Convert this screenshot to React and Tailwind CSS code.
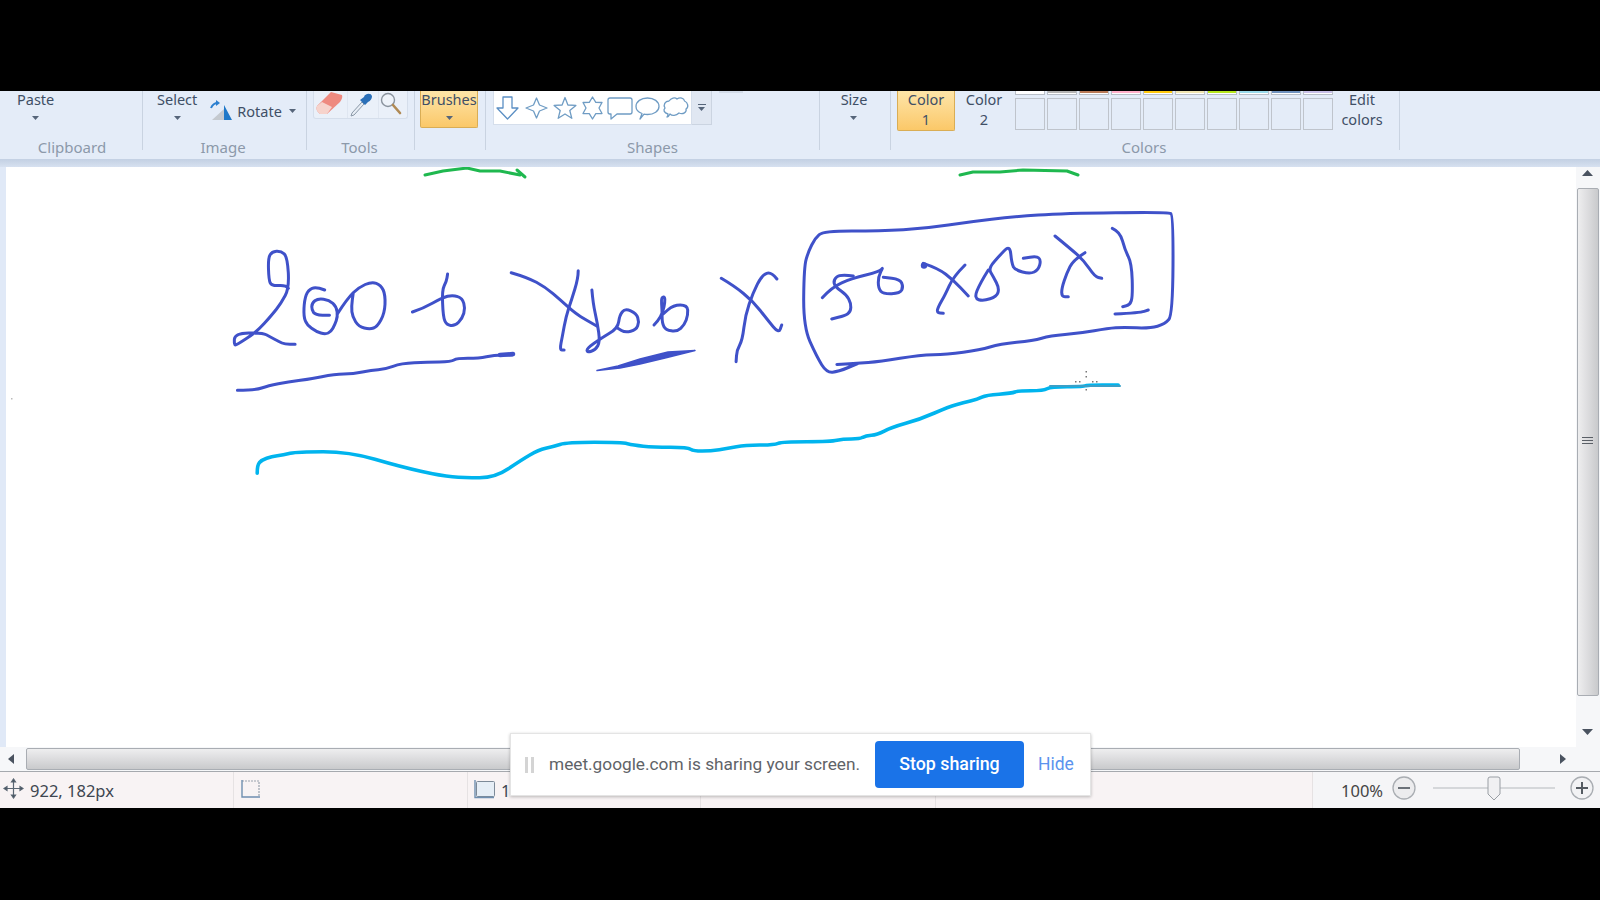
const sans = { fontFamily: '"Noto Sans", "Open Sans", sans-serif' };

const z7 = (p) => [220 + p[0] * 0.37, 200 + p[1] / 3];
const z8 = (p) => [780 + p[0] / 3, 200 + p[1] / 3];
const z9 = (p) => [240 + p[0] * 0.574, 370 + p[1] / 3];
const toD = (pts, map) => {
  const q = pts.map(map);
  let d = 'M' + q[0][0].toFixed(1) + ' ' + q[0][1].toFixed(1);
  for (let i = 1; i < q.length - 1; i++) {
    const mx = (q[i][0] + q[i + 1][0]) / 2;
    const my = (q[i][1] + q[i + 1][1]) / 2;
    d += ' Q' + q[i][0].toFixed(1) + ' ' + q[i][1].toFixed(1) + ' ' + mx.toFixed(1) + ' ' + my.toFixed(1);
  }
  const e = q[q.length - 1];
  return d + ' L' + e[0].toFixed(1) + ' ' + e[1].toFixed(1);
};

const s7 = [
  [[185,265],[178,255],[140,258],[132,240],[130,175],[140,155],[165,153],[182,170],[187,265],[165,310],[140,345],[100,395],[45,435],[38,435],[40,400],[115,398],[135,410],[160,425],[175,433],[203,433]],
  [[283,270],[260,260],[238,270],[228,300],[226,350],[235,375],[260,395],[285,403],[300,395],[310,375],[318,350],[315,320],[295,300],[265,295],[248,310],[248,330],[258,345],[296,346]],
  [[318,340],[345,295],[375,262],[410,245],[435,255],[447,285],[445,340],[425,380],[405,388],[375,380],[358,350],[355,320],[360,280]],
  [[520,336],[550,325],[600,293],[630,285],[655,295],[663,325],[655,355],[635,378],[612,375],[603,350],[600,270],[612,245],[615,222]],
  [[47,571],[95,571],[130,557],[185,545],[240,538],[310,522],[360,522],[410,510],[445,508],[490,490],[560,487],[625,485],[640,475],[700,475],[740,465],[790,465]],
  [[787,218],[830,232],[880,262],[920,300],[960,340],[990,360],[1018,378]],
  [[968,212],[968,235],[950,300],[935,350],[925,410],[918,450],[930,450]],
  [[1005,270],[1008,310],[1020,370],[1027,425],[1015,450],[992,458],[992,445],[1030,415],[1075,385],[1080,345],[1095,325],[1125,340],[1133,365],[1125,390],[1095,398],[1075,385]],
  [[1173,375],[1195,350],[1205,290],[1192,292],[1195,330],[1195,370],[1205,390],[1235,395],[1255,375],[1265,345],[1263,315],[1225,315],[1195,345]],
  [[1355,235],[1390,258],[1440,303],[1480,360],[1510,400],[1518,375]],
  [[1505,237],[1490,215],[1465,225],[1440,280],[1420,345],[1412,420],[1397,450],[1395,485]],
];
const s8 = [
  [[235,490],[140,495],[230,490],[300,485],[420,465],[500,463],[600,450],[660,432],[760,422],[810,407],[900,400],[985,385],[1030,382],[1110,385],[1155,372],[1178,345],[1180,45],[1165,36],[850,40],[700,50],[570,65],[440,85],[300,93],[130,93],[105,115],[85,155],[72,200],[70,380],[110,470],[140,518],[175,515],[235,490]],
  [[127,293],[155,262],[215,235],[300,215],[310,200],[295,230],[295,265],[310,282],[360,280],[370,260],[360,238],[310,232]],
  [[220,228],[180,222],[160,240],[165,260],[200,285],[213,310],[212,335],[195,347],[155,357]],
  [[430,190],[475,205],[520,240],[565,288]],
  [[555,195],[520,230],[495,285],[475,320],[470,338],[490,340]],
  [[625,210],[600,250],[582,295],[610,303],[650,290],[658,265],[640,230],[625,205],[660,165],[690,135],[695,190],[705,210],[750,222],[775,210],[783,180],[770,168],[730,175]],
  [[825,108],[870,145],[910,180],[945,230],[965,235]],
  [[915,158],[880,180],[860,220],[845,265],[845,290],[865,290]],
  [[997,85],[1020,95],[1035,150],[1055,190],[1058,290],[1050,315],[1028,320]],
  [[1005,342],[1080,338],[1105,330]],
];
const cyan = [[30,310],[30,285],[38,270],[55,260],[75,255],[100,245],[190,245],[280,290],[350,317],[390,323],[445,323],[490,270],[520,240],[545,230],[570,217],[665,217],[685,225],[720,232],[780,232],[790,243],[820,243],[850,235],[880,225],[930,225],[945,215],[1030,215],[1050,207],[1080,207],[1090,197],[1110,195],[1135,172],[1185,148],[1235,110],[1260,98],[1285,88],[1300,75],[1345,70],[1355,62],[1400,62],[1412,50],[1470,50],[1475,45],[1530,45]];

function Drawing() {
  return (
    <svg className="absolute left-0 top-0 h-[580px] w-[1570px]" viewBox="6 167 1570 580" fill="none" strokeLinecap="round" strokeLinejoin="round">
      <g stroke="#1fb84f" strokeWidth="3">
        <path d="M425 175 L443 171 L467 168 L480 171 L500 171 L520 175" />
        <path d="M517 170 L525 177" />
        <path d="M960 175 L973 172 L1000 172 L1023 170 L1067 171 L1078 175" />
      </g>
      <g stroke="#3f51c9" strokeWidth="3">
        {s7.map((p, i) => <path key={i} d={toD(p, z7)} />)}
        {s8.map((p, i) => <path key={i} d={toD(p, z8)} />)}
      </g>
      <path d="M500 355 L513 354" stroke="#3f51c9" strokeWidth="4.500" />
      <path d="M597 370.500 L620 368 L640 364 L665 358 L695 350.500 L668 352 L640 359 L618 366Z" fill="#3f51c9" stroke="#3f51c9" strokeWidth="1.500" />
      <circle cx="924" cy="265.500" r="3.200" fill="#3f51c9" />
      <path d={toD(cyan, z9)} stroke="#00b4ee" strokeWidth="3.600" />
      <path d="M1050 386 H1120" stroke="#3aa0c8" strokeWidth="2" />
      <g fill="#777">
        <rect x="1085.500" y="371" width="1.500" height="1.500" />
        <rect x="1085.500" y="376" width="1.500" height="1.500" />
        <rect x="1085.500" y="389" width="1.500" height="1.500" />
        <rect x="1075" y="381" width="1.500" height="1.500" />
        <rect x="1079" y="381" width="1.500" height="1.500" />
        <rect x="1092" y="381" width="1.500" height="1.500" />
        <rect x="1096" y="381" width="1.500" height="1.500" />
        <rect x="11" y="398" width="1.500" height="1.500" fill="#bbb" />
      </g>
    </svg>
  );
}

function Caret({ className = '' }) {
  return (
    <svg className={className} width="7" height="4" viewBox="0 0 7 4"><path d="M0 0H7L3.500 4Z" fill="#56657a" /></svg>
  );
}

function BigButton({ lines, caret }) {
  return (
    <div className="flex flex-col items-center text-[#3f4f66]">
      <span className="whitespace-nowrap leading-[17px]">{lines[0]}</span>
      {lines[1] && <span className="mt-[2px] whitespace-nowrap leading-[19px]">{lines[1]}</span>}
      {caret && <Caret className="mt-[8px]" />}
    </div>
  );
}

function Group({ w, label, labelClass = '', children }) {
  return (
    <div className={`flex h-[59px] shrink-0 flex-col border-r border-[#c9d3e1] ${w}`}>
      <div className="relative flex flex-1 items-start">{children}</div>
      {label ? (
        <div className={`mb-[-5px] h-[16px] text-center text-[15px] leading-[16px] text-[#8c99aa] ${labelClass}`}>{label}</div>
      ) : null}
    </div>
  );
}

function star(cx, cy, R, r, n) {
  const pts = [];
  for (let i = 0; i < n * 2; i++) {
    const a = -Math.PI / 2 + (i * Math.PI) / n;
    const rad = i % 2 ? r : R;
    pts.push((cx + rad * Math.cos(a)).toFixed(1) + ',' + (cy + rad * Math.sin(a)).toFixed(1));
  }
  return pts.join(' ');
}

function ShapesGallery() {
  return (
    <svg width="199" height="34" viewBox="0 0 199 34" fill="none" stroke="#6f9cc4" strokeWidth="1.300" strokeLinejoin="round">
      <path d="M10 6H19V17H25L14.500 28L4 17H10Z" stroke="#5b8fc4" />
      <path d="M43.500 7L46.500 14L54 17L46.500 20L43.500 27L40.500 20L33 17L40.500 14Z" />
      <polygon points={star(72, 18, 11.500, 5, 5)} />
      <polygon points={star(99.500, 17, 11, 6.500, 6)} />
      <path d="M117 7H137Q139 7 139 9V21Q139 23 137 23H124L118 28V23H117Q115 23 115 21V9Q115 7 117 7Z" />
      <path d="M147 28L149 22.500C145 21 143 18.500 143 15.500C143 10.500 148 7 154.500 7C161 7 166 10.500 166 15.500C166 20 161 23.500 154.500 23.500C153 23.500 152 23.500 151 23.200Z" />
      <path d="M174 26C175 25 175 24 175 23C171 22 170 19 172 17C170 14 172 10 176 10C178 7 182 6 184 8C187 6 191 7 191.500 10C195 11.500 196 16 193 18C194 21 190 24 186 22C183 25 179 25 177 23C176 25 175 26 174 26Z" />
    </svg>
  );
}

function RibbonIcons() {
  return (
    <svg width="95" height="28" viewBox="0 0 95 28" className="shrink-0">
      <g transform="translate(-313 -91)">
        <path d="M331 92 L342 95 Q343 98 340 102 L327 114 L320 114 Q315 110 317 106Z" fill="#ee8a80" />
        <path d="M322 102 L332 107 L327 114 L320 114 Q315 110 317 106Z" fill="#f6d3cc" />
        <path d="M352 113 L351 116 L354 115 L364 104 L362 102Z" fill="#e7edf5" stroke="#8a98a8" strokeWidth="1" />
        <path d="M360 100 L365 105 L368 102 Q372 100 372 96 Q371 93 367 94 Q364 95 364 97Z" fill="#2a6fb8" />
        <circle cx="388" cy="100" r="6.500" fill="#eef3fa" stroke="#8a939e" strokeWidth="1.400" />
        <path d="M393 105 L400 113" stroke="#b08a55" strokeWidth="2.600" strokeLinecap="round" />
        <path d="M347.500 91V119M378.500 91V119" stroke="#dfe6f1" />
      </g>
    </svg>
  );
}

const swatches = ['#ffffff', '#b4b4b4', '#b97a57', '#ffaec9', '#ffc90e', '#efe4b0', '#b5e61d', '#99d9ea', '#7092be', '#c8bfe7'];

function Ribbon() {
  return (
    <div className="flex h-[68px] bg-[#e4ecf8] text-[14.500px]" style={sans}>
      <Group w="w-[143px]" label="Clipboard" labelClass="pl-[2px]">
        <div className="ml-[17px]"><BigButton lines={['Paste']} caret /></div>
      </Group>
      <Group w="w-[164px]" label="Image" labelClass="pr-[3px]">
        <div className="ml-[14px]"><BigButton lines={['Select']} caret /></div>
        <div className="ml-[13px] mt-[9px] flex items-center text-[#3f4f66]">
          <svg width="26" height="22" viewBox="0 0 26 22" className="shrink-0">
            <path d="M1 8 Q3 3 8 3" fill="none" stroke="#2a7fd0" strokeWidth="2" />
            <path d="M6 0 L10 3 L6 6Z" fill="#2a7fd0" />
            <path d="M2 20 L14 20 L14 9Z" fill="#c4c9cf" />
            <path d="M14 5 L22 20 L14 20Z" fill="#1f78c8" />
          </svg>
          <span className="ml-[1px] leading-[19px]">Rotate</span>
          <Caret className="ml-[7px]" />
        </div>
      </Group>
      <Group w="w-[108px]" label="Tools" labelClass="pr-[2px]">
        <div className="ml-[6px] flex h-[28px] w-[95px] overflow-hidden rounded-b-[3px] border border-t-0 border-[#d5deeb] bg-[#eaf0f9]">
          <div className="-ml-px"><RibbonIcons /></div>
        </div>
      </Group>
      <Group w="w-[71px]">
        <div className="ml-[5px] flex h-[37px] w-[58px] flex-col items-center rounded-b-[2px] border border-t-0 border-[#d9ad55] bg-gradient-to-b from-[#fde5a8] to-[#fbc868] text-[#3f4f66]">
          <span className="leading-[17px]">Brushes</span>
          <Caret className="mt-[8px]" />
        </div>
      </Group>
      <Group w="w-[334px]" label="Shapes">
        <div className="ml-[7px] flex">
          <div className="h-[34px] w-[199px] border border-t-0 border-[#d5deeb] bg-white"><div className="-ml-px"><ShapesGallery /></div></div>
          <div className="flex h-[34px] w-[20px] flex-col items-center justify-center gap-[2px] border-b border-r border-[#cbd4e1] bg-[#e0e7f2]">
            <div className="h-[1.500px] w-[8px] bg-[#56657a]" />
            <Caret />
          </div>
        </div>
        <div className="ml-[7px] h-[2px] w-[24px] bg-[#d2dbe8]" />
      </Group>
      <Group w="w-[71px]">
        <div className="flex w-full justify-center pr-[2px]"><BigButton lines={['Size']} caret /></div>
      </Group>
      <Group w="w-[509px]" label="Colors" labelClass="pr-[2px]">
        <div className="ml-[6px] flex h-[40px] w-[58px] flex-col items-center rounded-b-[2px] border border-t-0 border-[#d9ad55] bg-gradient-to-b from-[#fde5a8] to-[#fbc868] text-[#3f4f66]">
          <span className="leading-[17px]">Color</span>
          <span className="mt-[2px] leading-[19px]">1</span>
        </div>
        <div className="flex w-[58px] justify-center"><BigButton lines={['Color', '2']} /></div>
        <div className="ml-[2px] grid h-[39px] w-[318px] grid-cols-10 content-start gap-x-[2px] gap-y-[3px]">
          {swatches.map((c) => (
            <div key={c} className="h-[4px] border border-t-0 border-[#b9bfc8] bg-white pb-[1px]"><div className="h-full" style={{ background: c }} /></div>
          ))}
          {swatches.map((c) => (
            <div key={c} className="h-[32px] border border-[#bfc4cc]" />
          ))}
        </div>
        <div className="flex w-[58px] justify-center"><BigButton lines={['Edit', 'colors']} /></div>
      </Group>
      <div className="flex-1" />
    </div>
  );
}

function VScroll() {
  return (
    <div className="flex w-[24px] shrink-0 flex-col items-center bg-[#f6f7f9]">
      <svg className="-ml-[2px] mt-[3px] shrink-0" width="11" height="6" viewBox="0 0 11 6"><path d="M0 6L5.500 0L11 6Z" fill="#4a5360" /></svg>
      <div className="-ml-px mt-[12px] flex h-[508px] w-[22px] flex-col items-center justify-center gap-[2px] rounded-[2px] border border-[#a9adb3] bg-gradient-to-r from-[#eeeeef] via-[#dcdcde] to-[#c9cacc] pb-[3px]">
        <div className="h-px w-[11px] bg-[#5a5f66]" />
        <div className="h-px w-[11px] bg-[#5a5f66]" />
        <div className="h-px w-[11px] bg-[#5a5f66]" />
      </div>
      <svg className="-ml-[2px] mt-[33px] shrink-0" width="11" height="6" viewBox="0 0 11 6"><path d="M0 0H11L5.500 6Z" fill="#4a5360" /></svg>
    </div>
  );
}

function HScroll() {
  return (
    <div className="flex h-[24px] items-center bg-[#f6f7f9]">
      <svg className="ml-[8px] shrink-0" width="6" height="10" viewBox="0 0 6 10"><path d="M6 0V10L0 5Z" fill="#4a5360" /></svg>
      <div className="ml-[12px] h-[22px] w-[1494px] rounded-[2px] border border-[#a9adb3] bg-gradient-to-b from-[#eeeeef] via-[#dcdcde] to-[#c9cacc]" />
      <svg className="ml-[40px] shrink-0" width="6" height="10" viewBox="0 0 6 10"><path d="M0 0L6 5L0 10Z" fill="#4a5360" /></svg>
    </div>
  );
}

function StatusBar() {
  return (
    <div className="flex h-[37px] border-t border-[#a6a9ae] bg-[#f8f3f4] text-[16.500px] text-[#3e4650]" style={sans}>
      <div className="flex w-[234px] shrink-0 items-center border-r border-[#e6e2e3]">
        <svg className="mb-[4px] ml-[3px]" width="21" height="21" viewBox="0 0 21 21" fill="none" stroke="#5a6672" strokeWidth="1.200">
          <path d="M1 10.500H20M10.500 1V20" />
          <path d="M1 10.500L4 8.500V12.500ZM20 10.500L17 8.500V12.500ZM10.500 1L8.500 4H12.500ZM10.500 20L8.500 17H12.500Z" fill="#3f4c5a" />
        </svg>
        <span className="ml-[6px] whitespace-nowrap pt-[3px]">922, 182px</span>
      </div>
      <div className="flex w-[234px] shrink-0 items-center border-r border-[#e6e2e3] pb-[3px]">
        <svg className="ml-[5px]" width="22" height="20" viewBox="0 0 22 20" fill="none">
          <path d="M3 2H20V17" stroke="#9aa3ad" strokeWidth="1.200" strokeDasharray="2 1" />
          <path d="M3 1V18H21" stroke="#6f8fb0" strokeWidth="1.400" />
        </svg>
      </div>
      <div className="flex w-[233px] shrink-0 items-center border-r border-[#e6e2e3] pb-[1px]">
        <svg className="mb-[2px] ml-[5px]" width="22" height="20" viewBox="0 0 22 20">
          <rect x="3.500" y="2.500" width="18" height="15" rx="1" fill="#e6eef6" stroke="#7d8a98" />
          <path d="M2 1V18.500H21" fill="none" stroke="#6f8fb0" strokeWidth="1.400" />
        </svg>
        <span className="ml-[6px] pt-[3px]">1</span>
      </div>
      <div className="w-[235px] shrink-0 border-r border-[#e6e2e3]" />
      <div className="w-[377px] shrink-0 border-r border-[#e6e2e3]" />
      <div className="flex flex-1 items-center bg-[#f5f5f7]">
        <span className="ml-[28px] whitespace-nowrap pt-[3px] leading-none text-[#444]">100%</span>
        <svg className="mb-[4px] ml-[9px]" width="24" height="24" viewBox="0 0 24 24">
          <circle cx="12" cy="12" r="11" fill="#ececee" stroke="#a9adb2" strokeWidth="1.300" />
          <path d="M6 12H18" stroke="#6b7178" strokeWidth="2" />
        </svg>
        <div className="relative mb-[4px] ml-[17px] flex h-[24px] w-[122px] items-center">
          <div className="h-[2px] w-full bg-[#d5d7da]" />
          <svg className="absolute left-[54px] top-0" width="14" height="25" viewBox="0 0 14 25">
            <path d="M1 3Q1 1 3 1H11Q13 1 13 3V18L7 24L1 18Z" fill="#f0f0f2" stroke="#999ea4" />
          </svg>
        </div>
        <svg className="mb-[4px] ml-[15px]" width="24" height="24" viewBox="0 0 24 24">
          <circle cx="12" cy="12" r="11" fill="#f2f2f4" stroke="#a9adb2" strokeWidth="1.300" />
          <path d="M6 12H18M12 6V18" stroke="#555b62" strokeWidth="2" />
        </svg>
      </div>
    </div>
  );
}

function ShareBar() {
  return (
    <div className="absolute left-[510px] top-[733px] flex h-[63px] w-[581px] items-center border border-[#e4e4e4] bg-white shadow-[0_1px_3px_rgba(0,0,0,0.25)]" style={{ fontFamily: 'Roboto, "Noto Sans", sans-serif' }}>
      <div className="ml-[14px] flex gap-[3px]">
        <div className="h-[16px] w-[3px] bg-[#d4d4d4]" />
        <div className="h-[16px] w-[3px] bg-[#d4d4d4]" />
      </div>
      <span className="ml-[15px] w-[326px] whitespace-nowrap text-[17.250px] text-[#5f6368]">meet.google.com is sharing your screen.</span>
      <button className="flex h-[47px] w-[149px] items-center justify-center rounded-[4px] bg-[#1a73e8] text-[17.800px] font-medium text-white">Stop sharing</button>
      <span className="ml-[14px] text-[17.500px] text-[#5b93ee]">Hide</span>
    </div>
  );
}

export default function App() {
  return (
    <div className="relative flex h-[900px] w-[1600px] flex-col overflow-hidden bg-black">
      <div className="h-[91px] shrink-0" />
      <Ribbon />
      <div className="h-[8px] shrink-0 bg-gradient-to-b from-[#c3d0e3] to-[#d7e1f0]" />
      <div className="flex h-[580px] shrink-0">
        <div className="w-[6px] shrink-0 bg-[#e0e9f7]" />
        <div className="relative flex-1 bg-white"><Drawing /></div>
        <VScroll />
      </div>
      <HScroll />
      <StatusBar />
      <ShareBar />
    </div>
  );
}
